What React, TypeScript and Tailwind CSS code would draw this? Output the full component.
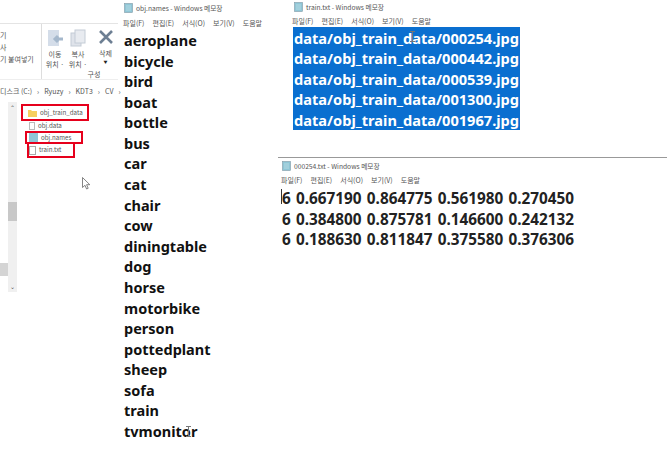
const FONT = "font-['Noto_Sans','Noto_Sans_CJK_KR',sans-serif]";
const UI = "font-['Noto_Sans_CJK_KR','Noto_Sans',sans-serif]";

function NoteIcon() {
  return (
    <svg width="9" height="10" viewBox="0 0 9 10" className="shrink-0">
      <rect x="0.5" y="0.5" width="8" height="9" fill="#8fc6d6" stroke="#7f9aa6" strokeWidth="0.6" />
      <path d="M2 3h5M2 5h5M2 7h5" stroke="#c5e3ea" strokeWidth="0.7" />
    </svg>
  );
}

function Menu() {
  return (
    <div className={`flex gap-[8px] text-[7px] leading-[10px] text-[#555] ${UI} whitespace-nowrap`}>
      <span>파일(F)</span>
      <span>편집(E)</span>
      <span>서식(O)</span>
      <span>보기(V)</span>
      <span>도움말</span>
    </div>
  );
}

function TitleBar({ title }: { title: string }) {
  return (
    <div className={`flex items-center gap-[3px] text-[6.7px] leading-[10px] text-[#555] ${UI} whitespace-nowrap`}>
      <NoteIcon />
      <span>{title}</span>
    </div>
  );
}

function Explorer() {
  return (
    <div className={`w-[118px] shrink-0 h-full flex flex-col text-[#555] ${UI}`}>
      <div className="h-[24px] border-b border-[#e4e4e4]" />
      <div className="h-[56px] flex border-b border-[#eee] text-[7px] leading-[10px]">
        <div className="w-[42px] border-r border-[#ddd] pt-[6px] flex flex-col gap-[2px]">
          <span>기</span>
          <span>사</span>
          <span className="whitespace-nowrap">기 붙여넣기</span>
        </div>
        <div className="flex-1 flex flex-col items-center">
          <div className="flex gap-[6px] pt-[5px] pl-[1px]">
            <div className="flex flex-col items-center w-[17px]">
              <svg width="16" height="18" viewBox="0 0 16 18">
                <rect x="1" y="1" width="11" height="16" fill="#d4dde9" />
                <path d="M16 10H9M11 7l-3 3 3 3" stroke="#a5b8cc" strokeWidth="3" fill="none" />
              </svg>
              <span className="whitespace-nowrap pt-[2px]">이동</span>
              <span className="whitespace-nowrap">위치 ·</span>
            </div>
            <div className="flex flex-col items-center w-[17px]">
              <svg width="16" height="18" viewBox="0 0 16 18">
                <rect x="1" y="4" width="10" height="13" fill="#dfe3ea" stroke="#c4ccd6" />
                <rect x="5" y="1" width="10" height="13" fill="#e8ebf0" stroke="#c4ccd6" />
              </svg>
              <span className="whitespace-nowrap pt-[2px]">복사</span>
              <span className="whitespace-nowrap">위치 ·</span>
            </div>
            <div className="flex flex-col items-center w-[18px] ml-[4px]">
              <svg width="16" height="16" viewBox="0 0 16 16">
                <path d="M2 2l12 12M14 2L2 14" stroke="#6d7f93" strokeWidth="2.6" />
              </svg>
              <span className="whitespace-nowrap pt-[3px]">삭제</span>
              <span className="text-[4px] leading-[8px] text-[#222]">▼</span>
            </div>
          </div>
          <span className="mt-auto pb-[2px] ml-[28px]">구성</span>
        </div>
      </div>
      <div className="h-[18px] flex items-center gap-[5px] pt-[4px] text-[7px] whitespace-nowrap">
        <span>디스크 (C:)</span>
        <span>›</span>
        <span>Ryuzy</span>
        <span>›</span>
        <span>KDT3</span>
        <span>›</span>
        <span>CV</span>
        <span>›</span>
      </div>
      <div className="flex flex-1 items-start pt-[4px]">
        <div className="w-[8px] h-[190px] shrink-0 flex flex-col justify-end">
          <div className="w-[8px] h-[13px] bg-[#d4d4d4] mb-[16px]" />
        </div>
        <div className="w-[9px] h-[190px] shrink-0 bg-[#f0f0f0] flex flex-col items-center">
          <span className="text-[6px] leading-[10px] pt-[1px]">⌃</span>
          <div className="w-full h-[19px] bg-[#c8c8c8] mt-[89px]" />
          <span className="text-[6px] leading-[10px] mt-auto">⌄</span>
        </div>
        <div className="flex flex-col text-[6.2px] leading-[10px] pl-[12px] pt-[2px]">
          <div className="flex items-center gap-[3px] h-[13px] border-[2px] border-[#e6001c] -ml-[8px] w-[59px] pl-[5px] box-content">
            <svg width="9" height="8" viewBox="0 0 9 8" className="shrink-0"><path d="M0 1h3l1 1h5v6H0z" fill="#f6cf5e" /></svg>
            <span>obj_train_data</span>
          </div>
          <div className="flex items-center gap-[3px] h-[10px]">
            <svg width="6" height="8" viewBox="0 0 6 8" className="shrink-0"><rect x="0.5" y="0.5" width="5" height="7" fill="#fff" stroke="#bbb" /></svg>
            <span>obj.data</span>
          </div>
          <div className="flex items-center gap-[3px] h-[9px] border-[2px] border-[#e6001c] -ml-[4px] w-[52px] pl-[2px] box-content">
            <svg width="9" height="9" viewBox="0 0 9 9" className="shrink-0"><rect width="9" height="9" fill="#8fc6d6" /></svg>
            <span>obj.names</span>
          </div>
          <div className="flex items-center gap-[3px] h-[12px] border-[2px] border-t-0 border-[#e6001c] -ml-[2px] w-[44px] box-content">
            <svg width="7" height="9" viewBox="0 0 7 9" className="shrink-0"><rect x="0.5" y="0.5" width="6" height="8" fill="#fff" stroke="#aaa" /></svg>
            <span>train.txt</span>
          </div>
        </div>
      </div>
    </div>
  );
}

function IBeam({ className }: { className: string }) {
  return (
    <svg width="7" height="11" viewBox="0 0 7 11" className={`absolute ${className}`}>
      <path d="M1 .5h5M3.5.5v10M1 10.5h5" stroke="#777" strokeWidth="1" fill="none" />
    </svg>
  );
}

const NAMES = ["aeroplane","bicycle","bird","boat","bottle","bus","car","cat","chair","cow","diningtable","dog","horse","motorbike","person","pottedplant","sheep","sofa","train","tvmonitor"];
const PATHS = ["000254","000442","000539","001300","001967"];
const ROWS = [
  "6 0.667190 0.864775 0.561980 0.270450",
  "6 0.384800 0.875781 0.146600 0.242132",
  "6 0.188630 0.811847 0.375580 0.376306",
];

export default function App() {
  return (
    <div className={`relative w-[672px] h-[472px] bg-white flex overflow-hidden ${FONT}`}>
      <Explorer />
      <div className="w-[160px] shrink-0 pl-[5px]">
        <div className="pt-[3px] pl-[1px]"><TitleBar title="obj.names - Windows 메모장" /></div>
        <div className="pt-[5px]"><Menu /></div>
        <div className="pt-[2px] pl-[1px] text-[14.5px] leading-[20.58px] font-bold text-[#111]">
          {NAMES.map((n) => <div key={n}>{n}</div>)}
        </div>
      </div>
      <div className="flex-1 min-w-0 flex flex-col mr-[5px]">
        <div className="pl-[14px] pt-[2px]">
          <div className="pl-[2px]"><TitleBar title="train.txt - Windows 메모장" /></div>
          <div className="pt-[4px]"><Menu /></div>
          <div className="mt-[1px] ml-[1px] w-fit bg-[#0a6fd0] text-white text-[14.6px] leading-[20.4px] font-bold px-[1px] pt-[1px]">
            {PATHS.map((p) => <div key={p}>data/obj_train_data/{p}.jpg</div>)}
          </div>
        </div>
        <div className="mt-[27px] border-t border-[#999] pl-[3px] pt-[3px]">
          <div className="pl-[1px]"><TitleBar title="000254.txt - Windows 메모장" /></div>
          <div className="pt-[4px]"><Menu /></div>
          <div className="pt-[3px] pl-[1px] text-[15.3px] leading-[20.58px] font-bold text-[#222] whitespace-nowrap [word-spacing:1.3px]">
            {ROWS.map((r) => <div key={r}>{r}</div>)}
          </div>
        </div>
      </div>
      <div className="absolute left-[281px] top-[189px] w-px h-[15px] bg-[#333]" />
      <IBeam className="left-[409px] top-[31px]" />
      <IBeam className="left-[185px] top-[426px]" />
      <svg width="8" height="13" viewBox="0 0 8 13" className="absolute left-[82px] top-[177px]">
        <path d="M.5.5v10l2.5-2.2 1.6 3.7 1.6-.7-1.6-3.6h3.2z" fill="#fff" stroke="#666" strokeWidth="0.8" />
      </svg>
    </div>
  );
}
